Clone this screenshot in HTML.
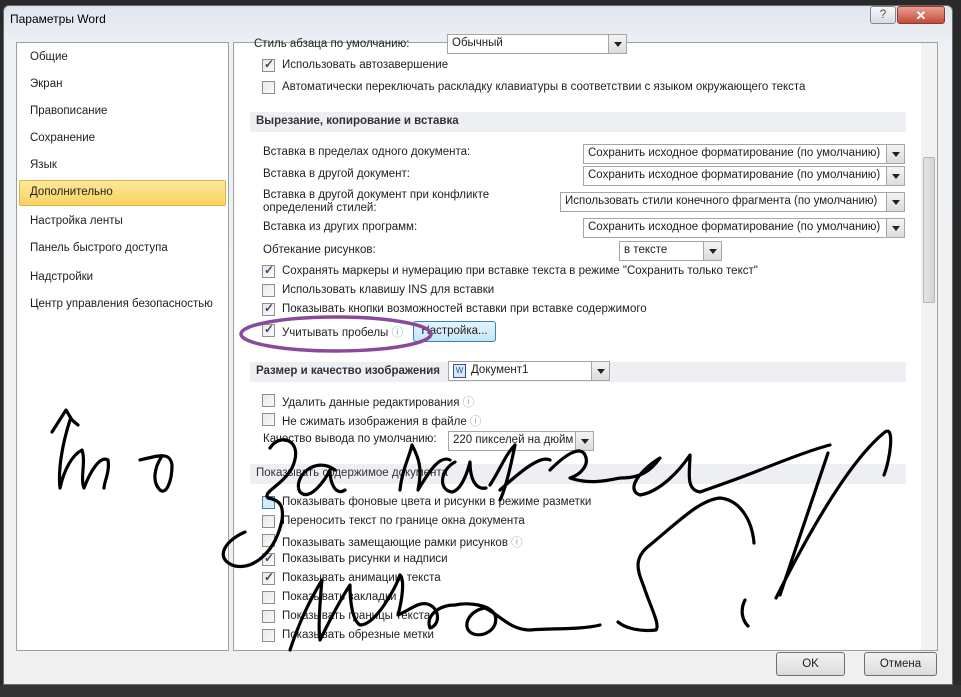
<!DOCTYPE html>
<html><head><meta charset="utf-8"><style>
*{margin:0;padding:0;box-sizing:border-box}
body{width:961px;height:697px;overflow:hidden;background:#2a2a2a;font-family:"Liberation Sans",sans-serif;font-size:11.5px;color:#1e1e1e;position:relative}
.win{position:absolute;left:3px;top:5px;width:950px;height:680px;background:linear-gradient(#dfe6ee,#eef1f4 40px,#f0f0f0);border:1px solid #6a6a6a;border-radius:6px 6px 0 0}
.abs{position:absolute;white-space:nowrap}
.panel{position:absolute;background:#fff;border:1px solid #a0a0a0}
.cb{position:absolute;width:13px;height:13px;border:1px solid #8e8f8f;background:linear-gradient(135deg,#e8e8e8,#fafafa)}
.cb.c::after{content:"✓";position:absolute;left:1px;top:-3px;font-size:12px;color:#3b4a6b;font-weight:bold}
.sec{position:absolute;left:250px;width:656px;height:20px;background:#eeeff2;font-weight:bold;color:#333;padding:3px 6px}
.dd{position:absolute;height:20px;border:1px solid #a5a5a5;background:#fff;padding:2px 4px}
.dd .ar{position:absolute;right:0;top:0;width:18px;height:18px;border-left:1px solid #a5a5a5;background:linear-gradient(#f4f4f4,#dcdcdc)}
.dd .ar::after{content:"";position:absolute;left:5px;top:7px;border-left:4px solid transparent;border-right:4px solid transparent;border-top:5px solid #222}
.btn{position:absolute;height:24px;border:1px solid #707070;border-radius:3px;background:linear-gradient(#f2f2f2,#dcdcdc);text-align:center;line-height:22px}
.nav{position:absolute;left:30px}
</style></head><body>
<div class="win"></div>
<div class="abs" style="left:10px;top:12px;font-size:12px;color:#000">Параметры Word</div>
<div class="abs" style="left:870px;top:6px;width:26px;height:18px;border:1px solid #888;border-radius:3px;background:linear-gradient(#f8f8f8,#d8dde4);text-align:center;font-size:12px;color:#555">?</div>
<div class="abs" style="left:897px;top:6px;width:48px;height:18px;border:1px solid #8a3a30;border-radius:3px;background:linear-gradient(#e8a095,#c44a38);text-align:center;color:#fff;font-weight:bold;font-size:13px;line-height:17px">✕</div>

<div class="panel" style="left:16px;top:42px;width:213px;height:609px"></div>
<div class="nav abs" style="top:51px">Общие</div>
<div class="nav abs" style="top:78px">Экран</div>
<div class="nav abs" style="top:105px">Правописание</div>
<div class="nav abs" style="top:132px">Сохранение</div>
<div class="nav abs" style="top:159px">Язык</div>
<div class="abs" style="left:19px;top:180px;width:207px;height:26px;border:1px solid #e0b548;border-radius:2px;background:linear-gradient(#fde89a,#f9d35f)"></div>
<div class="nav abs" style="top:186px">Дополнительно</div>
<div class="nav abs" style="top:215px">Настройка ленты</div>
<div class="nav abs" style="top:242px">Панель быстрого доступа</div>
<div class="nav abs" style="top:271px">Надстройки</div>
<div class="nav abs" style="top:298px">Центр управления безопасностью</div>

<div class="panel" style="left:233px;top:42px;width:705px;height:609px;overflow:hidden">
<div style="position:absolute;right:0;top:0;width:16px;height:607px;background:#f2f2f2"></div>
<div style="position:absolute;right:2px;top:114px;width:12px;height:146px;background:linear-gradient(90deg,#e6e6e6,#d4d4d4);border:1px solid #b5b5b5;border-radius:2px"></div>
</div>
<div class="abs" style="left:254px;top:38px">Стиль абзаца по умолчанию:</div>
<div class="dd" style="left:447px;top:34px;width:180px">Обычный<div class="ar"></div></div>
<div class="cb c" style="left:262px;top:59px"></div><div class="abs" style="left:282px;top:59px">Использовать автозавершение</div>
<div class="cb" style="left:262px;top:81px"></div><div class="abs" style="left:282px;top:81px">Автоматически переключать раскладку клавиатуры в соответствии с языком окружающего текста</div>
<div class="sec" style="top:112px">Вырезание, копирование и вставка</div>
<div class="abs" style="left:263px;top:146px">Вставка в пределах одного документа:</div>
<div class="dd" style="left:583px;top:144px;width:322px">Сохранить исходное форматирование (по умолчанию)<div class="ar"></div></div>
<div class="abs" style="left:263px;top:168px">Вставка в другой документ:</div>
<div class="dd" style="left:583px;top:166px;width:322px">Сохранить исходное форматирование (по умолчанию)<div class="ar"></div></div>
<div class="abs" style="left:263px;top:189px;line-height:13px">Вставка в другой документ при конфликте<br>определений стилей:</div>
<div class="dd" style="left:560px;top:192px;width:345px">Использовать стили конечного фрагмента (по умолчанию)<div class="ar"></div></div>
<div class="abs" style="left:263px;top:221px">Вставка из других программ:</div>
<div class="dd" style="left:583px;top:218px;width:322px">Сохранить исходное форматирование (по умолчанию)<div class="ar"></div></div>
<div class="abs" style="left:263px;top:244px">Обтекание рисунков:</div>
<div class="dd" style="left:619px;top:241px;width:103px">в тексте<div class="ar"></div></div>
<div class="cb c" style="left:262px;top:265px"></div><div class="abs" style="left:282px;top:265px">Сохранять маркеры и нумерацию при вставке текста в режиме "Сохранить только текст"</div>
<div class="cb" style="left:262px;top:284px"></div><div class="abs" style="left:282px;top:284px">Использовать клавишу INS для вставки</div>
<div class="cb c" style="left:262px;top:303px"></div><div class="abs" style="left:282px;top:303px">Показывать кнопки возможностей вставки при вставке содержимого</div>
<div class="cb c" style="left:262px;top:324px"></div><div class="abs" style="left:282px;top:324px">Учитывать пробелы <span style="color:#8aa">ⓘ</span></div>
<div class="btn" style="left:413px;top:321px;width:83px;height:21px;line-height:19px;border-color:#3c7fb1;background:linear-gradient(#e5f4fc,#c4e5f6)">Настройка...</div>
<div class="sec" style="top:362px">Размер и качество изображения</div>
<div class="dd" style="left:448px;top:361px;width:162px;padding-left:22px"><span style="position:absolute;left:4px;top:2px;width:13px;height:14px;border:1px solid #2b579a;background:#dce6f4;font-size:8px;color:#2b579a;line-height:12px;text-align:center">W</span>Документ1<div class="ar"></div></div>
<div class="cb" style="left:262px;top:394px"></div><div class="abs" style="left:282px;top:394px">Удалить данные редактирования <span style="color:#8aa">ⓘ</span></div>
<div class="cb" style="left:262px;top:413px"></div><div class="abs" style="left:282px;top:413px">Не сжимать изображения в файле <span style="color:#8aa">ⓘ</span></div>
<div class="abs" style="left:263px;top:433px">Качество вывода по умолчанию:</div>
<div class="dd" style="left:448px;top:431px;width:146px">220 пикселей на дюйм<div class="ar"></div></div>
<div class="sec" style="top:464px;font-weight:normal">Показывать содержимое документа</div>
<div class="cb" style="left:262px;top:496px;border-color:#3c7fb1;background:#d5ecf8"></div><div class="abs" style="left:282px;top:496px">Показывать фоновые цвета и рисунки в режиме разметки</div>
<div class="cb" style="left:262px;top:515px"></div><div class="abs" style="left:282px;top:515px">Переносить текст по границе окна документа</div>
<div class="cb" style="left:262px;top:534px"></div><div class="abs" style="left:282px;top:534px">Показывать замещающие рамки рисунков <span style="color:#8aa">ⓘ</span></div>
<div class="cb c" style="left:262px;top:553px"></div><div class="abs" style="left:282px;top:553px">Показывать рисунки и надписи</div>
<div class="cb c" style="left:262px;top:572px"></div><div class="abs" style="left:282px;top:572px">Показывать анимацию текста</div>
<div class="cb" style="left:262px;top:591px"></div><div class="abs" style="left:282px;top:591px">Показывать закладки</div>
<div class="cb" style="left:262px;top:610px"></div><div class="abs" style="left:282px;top:610px">Показывать границы текста</div>
<div class="cb" style="left:262px;top:629px"></div><div class="abs" style="left:282px;top:629px">Показывать обрезные метки</div>
<div class="btn" style="left:776px;top:652px;width:69px">OK</div>
<div class="btn" style="left:864px;top:652px;width:73px">Отмена</div>
<div class="abs" style="left:0;top:685px;width:961px;height:12px;background:#333"></div>

<svg class="abs" style="left:0;top:0" width="961" height="697" viewBox="0 0 961 697">
<ellipse cx="336" cy="334" rx="95" ry="17" fill="none" stroke="#8a4a9a" stroke-width="3.5"/>
<g fill="none" stroke="#000" stroke-width="3.2" stroke-linecap="round" stroke-linejoin="round">
<path d="M52,432 L66,410 L72,420 L78,425 M70,420 C62,445 58,470 60,488 C64,470 72,455 82,450 C86,462 80,478 84,488 C90,472 100,455 108,460 C110,472 104,482 104,488 M140,460 C160,455 170,452 172,465 C172,482 166,495 160,490 C152,482 154,468 162,456"/>
<path d="M270,448 C280,432 305,440 292,468 C282,486 262,492 268,498 C280,500 284,506 282,520 C276,550 255,570 235,566 C215,560 222,542 245,532"/>
<path d="M335,470 C315,455 292,478 300,492 C310,502 325,480 330,470 C330,484 336,496 345,490"/>
<path d="M400,490 C402,470 410,455 412,445 C420,460 422,470 418,490 C430,470 440,455 450,460 M455,462 C440,470 438,490 452,492 C462,490 468,470 470,462 C470,478 475,490 486,488 M490,485 C500,470 505,455 515,445 M515,445 C510,470 505,490 500,500 M500,490 C520,472 540,455 550,460 M550,470 C565,455 580,445 585,455 C590,465 580,475 570,478 C590,485 610,480 620,478 C640,478 650,472 660,458 C640,470 625,490 640,495 C660,492 680,470 690,455 C690,470 685,490 700,492 C720,485 740,478 760,470 C780,462 810,450 830,445 M828,453 L780,595 M776,598 C810,530 850,460 885,432 C895,425 890,460 884,475"/>
<path d="M754,543 C752,520 740,500 720,498 C700,500 680,520 650,545 C630,560 640,575 645,590 C652,610 660,625 656,630 C640,632 625,628 618,622"/>
<path d="M290,650 C300,620 310,600 322,580 C320,600 318,630 320,640 C330,620 340,600 350,585 C350,600 352,620 360,625 C375,625 395,590 400,575 C405,580 402,600 398,615 C410,610 420,600 430,605 C440,610 440,625 430,628 C425,615 440,605 455,605 C470,602 490,605 495,615 C500,630 480,640 470,632 C462,625 470,610 485,608 C500,615 510,630 530,630 C550,628 580,630 600,625 M745,600 C740,610 742,620 748,626"/>
</g></svg>
</body></html>
